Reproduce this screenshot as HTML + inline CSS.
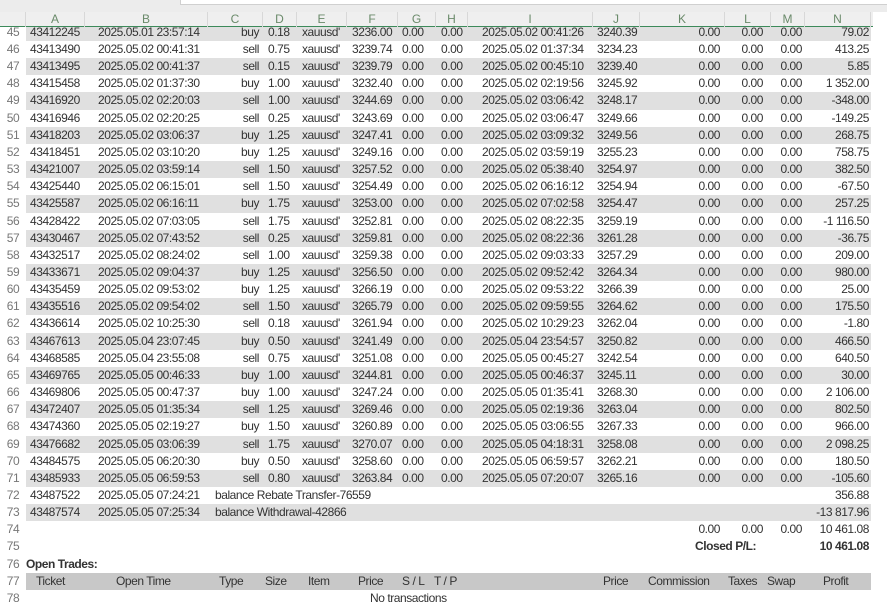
<!DOCTYPE html>
<html><head><meta charset="utf-8"><style>
*{margin:0;padding:0;box-sizing:border-box}
body{width:887px;height:600px;overflow:hidden;background:#fff;font-family:"Liberation Sans",sans-serif;font-size:12px;letter-spacing:-0.45px;color:#333;position:relative}
.top{position:absolute;left:0;top:0;width:887px;height:12px;background:#ececec}
.box{position:absolute;left:180px;top:-1px;width:720px;height:6px;background:#fff;border-bottom:1px solid #d0d0d0;border-left:1px solid #d0d0d0}
.hdr{position:absolute;left:0;top:12px;width:873px;height:15px;background:#efefef;display:grid;grid-template-columns:26px 59px 123px 55px 34px 50px 51px 38px 32px 125px 47px 85px 46px 34px 66px;color:#6a8a6a;font-size:12px;letter-spacing:0;line-height:15px;z-index:2;border-bottom:1.5px solid #3c8a5a}
.hdr div{text-align:center;border-right:1px solid #d8d8d8}
.rows{position:absolute;left:0;top:23.8px;width:871px}
.r{height:17.16px;line-height:17.16px;display:grid;grid-template-columns:26px 59px 123px 55px 34px 50px 51px 38px 32px 125px 47px 85px 46px 34px 66px;white-space:nowrap;position:relative}
.r.g{background:#e0e0e0}
.r.d{background:#c8c8c8}
.r div{overflow:visible}
.r div:nth-child(1){text-align:center;color:#777;background:#fff}
.r div:nth-child(2){padding-left:4px}
.r div:nth-child(3){padding-left:13px}
.r div:nth-child(4){text-align:right;padding-right:4px}
.r div:nth-child(5){padding-left:5px}
.r div:nth-child(6){padding-left:5px}
.r div:nth-child(7){padding-left:5px}
.r div:nth-child(8){padding-left:4px}
.r div:nth-child(9){padding-left:5px}
.r div:nth-child(10){padding-left:14px}
.r div:nth-child(11){padding-left:4px}
.r div:nth-child(12){text-align:right;padding-right:5px}
.r div:nth-child(13){text-align:right;padding-right:8px}
.r div:nth-child(14){text-align:right;padding-right:3px}
.r div:nth-child(15){text-align:right;padding-right:2px}
.b{font-weight:bold}
.abs{position:absolute;white-space:nowrap}
</style></head><body>
<div class="top"><div class="box"></div></div>
<div class="hdr"><div></div><div>A</div><div>B</div><div>C</div><div>D</div><div>E</div><div>F</div><div>G</div><div>H</div><div>I</div><div>J</div><div>K</div><div>L</div><div>M</div><div>N</div></div>
<div class="rows">
<div class="r g"><div>45</div><div>43412245</div><div>2025.05.01 23:57:14</div><div>buy</div><div>0.18</div><div>xauusd'</div><div>3236.00</div><div>0.00</div><div>0.00</div><div>2025.05.02 00:41:26</div><div>3240.39</div><div>0.00</div><div>0.00</div><div>0.00</div><div>79.02</div></div>
<div class="r"><div>46</div><div>43413490</div><div>2025.05.02 00:41:31</div><div>sell</div><div>0.75</div><div>xauusd'</div><div>3239.74</div><div>0.00</div><div>0.00</div><div>2025.05.02 01:37:34</div><div>3234.23</div><div>0.00</div><div>0.00</div><div>0.00</div><div>413.25</div></div>
<div class="r g"><div>47</div><div>43413495</div><div>2025.05.02 00:41:37</div><div>sell</div><div>0.15</div><div>xauusd'</div><div>3239.79</div><div>0.00</div><div>0.00</div><div>2025.05.02 00:45:10</div><div>3239.40</div><div>0.00</div><div>0.00</div><div>0.00</div><div>5.85</div></div>
<div class="r"><div>48</div><div>43415458</div><div>2025.05.02 01:37:30</div><div>buy</div><div>1.00</div><div>xauusd'</div><div>3232.40</div><div>0.00</div><div>0.00</div><div>2025.05.02 02:19:56</div><div>3245.92</div><div>0.00</div><div>0.00</div><div>0.00</div><div>1 352.00</div></div>
<div class="r g"><div>49</div><div>43416920</div><div>2025.05.02 02:20:03</div><div>sell</div><div>1.00</div><div>xauusd'</div><div>3244.69</div><div>0.00</div><div>0.00</div><div>2025.05.02 03:06:42</div><div>3248.17</div><div>0.00</div><div>0.00</div><div>0.00</div><div>-348.00</div></div>
<div class="r"><div>50</div><div>43416946</div><div>2025.05.02 02:20:25</div><div>sell</div><div>0.25</div><div>xauusd'</div><div>3243.69</div><div>0.00</div><div>0.00</div><div>2025.05.02 03:06:47</div><div>3249.66</div><div>0.00</div><div>0.00</div><div>0.00</div><div>-149.25</div></div>
<div class="r g"><div>51</div><div>43418203</div><div>2025.05.02 03:06:37</div><div>buy</div><div>1.25</div><div>xauusd'</div><div>3247.41</div><div>0.00</div><div>0.00</div><div>2025.05.02 03:09:32</div><div>3249.56</div><div>0.00</div><div>0.00</div><div>0.00</div><div>268.75</div></div>
<div class="r"><div>52</div><div>43418451</div><div>2025.05.02 03:10:20</div><div>buy</div><div>1.25</div><div>xauusd'</div><div>3249.16</div><div>0.00</div><div>0.00</div><div>2025.05.02 03:59:19</div><div>3255.23</div><div>0.00</div><div>0.00</div><div>0.00</div><div>758.75</div></div>
<div class="r g"><div>53</div><div>43421007</div><div>2025.05.02 03:59:14</div><div>sell</div><div>1.50</div><div>xauusd'</div><div>3257.52</div><div>0.00</div><div>0.00</div><div>2025.05.02 05:38:40</div><div>3254.97</div><div>0.00</div><div>0.00</div><div>0.00</div><div>382.50</div></div>
<div class="r"><div>54</div><div>43425440</div><div>2025.05.02 06:15:01</div><div>sell</div><div>1.50</div><div>xauusd'</div><div>3254.49</div><div>0.00</div><div>0.00</div><div>2025.05.02 06:16:12</div><div>3254.94</div><div>0.00</div><div>0.00</div><div>0.00</div><div>-67.50</div></div>
<div class="r g"><div>55</div><div>43425587</div><div>2025.05.02 06:16:11</div><div>buy</div><div>1.75</div><div>xauusd'</div><div>3253.00</div><div>0.00</div><div>0.00</div><div>2025.05.02 07:02:58</div><div>3254.47</div><div>0.00</div><div>0.00</div><div>0.00</div><div>257.25</div></div>
<div class="r"><div>56</div><div>43428422</div><div>2025.05.02 07:03:05</div><div>sell</div><div>1.75</div><div>xauusd'</div><div>3252.81</div><div>0.00</div><div>0.00</div><div>2025.05.02 08:22:35</div><div>3259.19</div><div>0.00</div><div>0.00</div><div>0.00</div><div>-1 116.50</div></div>
<div class="r g"><div>57</div><div>43430467</div><div>2025.05.02 07:43:52</div><div>sell</div><div>0.25</div><div>xauusd'</div><div>3259.81</div><div>0.00</div><div>0.00</div><div>2025.05.02 08:22:36</div><div>3261.28</div><div>0.00</div><div>0.00</div><div>0.00</div><div>-36.75</div></div>
<div class="r"><div>58</div><div>43432517</div><div>2025.05.02 08:24:02</div><div>sell</div><div>1.00</div><div>xauusd'</div><div>3259.38</div><div>0.00</div><div>0.00</div><div>2025.05.02 09:03:33</div><div>3257.29</div><div>0.00</div><div>0.00</div><div>0.00</div><div>209.00</div></div>
<div class="r g"><div>59</div><div>43433671</div><div>2025.05.02 09:04:37</div><div>buy</div><div>1.25</div><div>xauusd'</div><div>3256.50</div><div>0.00</div><div>0.00</div><div>2025.05.02 09:52:42</div><div>3264.34</div><div>0.00</div><div>0.00</div><div>0.00</div><div>980.00</div></div>
<div class="r"><div>60</div><div>43435459</div><div>2025.05.02 09:53:02</div><div>buy</div><div>1.25</div><div>xauusd'</div><div>3266.19</div><div>0.00</div><div>0.00</div><div>2025.05.02 09:53:22</div><div>3266.39</div><div>0.00</div><div>0.00</div><div>0.00</div><div>25.00</div></div>
<div class="r g"><div>61</div><div>43435516</div><div>2025.05.02 09:54:02</div><div>sell</div><div>1.50</div><div>xauusd'</div><div>3265.79</div><div>0.00</div><div>0.00</div><div>2025.05.02 09:59:55</div><div>3264.62</div><div>0.00</div><div>0.00</div><div>0.00</div><div>175.50</div></div>
<div class="r"><div>62</div><div>43436614</div><div>2025.05.02 10:25:30</div><div>sell</div><div>0.18</div><div>xauusd'</div><div>3261.94</div><div>0.00</div><div>0.00</div><div>2025.05.02 10:29:23</div><div>3262.04</div><div>0.00</div><div>0.00</div><div>0.00</div><div>-1.80</div></div>
<div class="r g"><div>63</div><div>43467613</div><div>2025.05.04 23:07:45</div><div>buy</div><div>0.50</div><div>xauusd'</div><div>3241.49</div><div>0.00</div><div>0.00</div><div>2025.05.04 23:54:57</div><div>3250.82</div><div>0.00</div><div>0.00</div><div>0.00</div><div>466.50</div></div>
<div class="r"><div>64</div><div>43468585</div><div>2025.05.04 23:55:08</div><div>sell</div><div>0.75</div><div>xauusd'</div><div>3251.08</div><div>0.00</div><div>0.00</div><div>2025.05.05 00:45:27</div><div>3242.54</div><div>0.00</div><div>0.00</div><div>0.00</div><div>640.50</div></div>
<div class="r g"><div>65</div><div>43469765</div><div>2025.05.05 00:46:33</div><div>buy</div><div>1.00</div><div>xauusd'</div><div>3244.81</div><div>0.00</div><div>0.00</div><div>2025.05.05 00:46:37</div><div>3245.11</div><div>0.00</div><div>0.00</div><div>0.00</div><div>30.00</div></div>
<div class="r"><div>66</div><div>43469806</div><div>2025.05.05 00:47:37</div><div>buy</div><div>1.00</div><div>xauusd'</div><div>3247.24</div><div>0.00</div><div>0.00</div><div>2025.05.05 01:35:41</div><div>3268.30</div><div>0.00</div><div>0.00</div><div>0.00</div><div>2 106.00</div></div>
<div class="r g"><div>67</div><div>43472407</div><div>2025.05.05 01:35:34</div><div>sell</div><div>1.25</div><div>xauusd'</div><div>3269.46</div><div>0.00</div><div>0.00</div><div>2025.05.05 02:19:36</div><div>3263.04</div><div>0.00</div><div>0.00</div><div>0.00</div><div>802.50</div></div>
<div class="r"><div>68</div><div>43474360</div><div>2025.05.05 02:19:27</div><div>buy</div><div>1.50</div><div>xauusd'</div><div>3260.89</div><div>0.00</div><div>0.00</div><div>2025.05.05 03:06:55</div><div>3267.33</div><div>0.00</div><div>0.00</div><div>0.00</div><div>966.00</div></div>
<div class="r g"><div>69</div><div>43476682</div><div>2025.05.05 03:06:39</div><div>sell</div><div>1.75</div><div>xauusd'</div><div>3270.07</div><div>0.00</div><div>0.00</div><div>2025.05.05 04:18:31</div><div>3258.08</div><div>0.00</div><div>0.00</div><div>0.00</div><div>2 098.25</div></div>
<div class="r"><div>70</div><div>43484575</div><div>2025.05.05 06:20:30</div><div>buy</div><div>0.50</div><div>xauusd'</div><div>3258.60</div><div>0.00</div><div>0.00</div><div>2025.05.05 06:59:57</div><div>3262.21</div><div>0.00</div><div>0.00</div><div>0.00</div><div>180.50</div></div>
<div class="r g"><div>71</div><div>43485933</div><div>2025.05.05 06:59:53</div><div>sell</div><div>0.80</div><div>xauusd'</div><div>3263.84</div><div>0.00</div><div>0.00</div><div>2025.05.05 07:20:07</div><div>3265.16</div><div>0.00</div><div>0.00</div><div>0.00</div><div>-105.60</div></div>
<div class="r"><div>72</div><div>43487522</div><div>2025.05.05 07:24:21</div><div style="text-align:left;padding-left:7px">balance Rebate Transfer-76559</div><div></div><div></div><div></div><div></div><div></div><div></div><div></div><div></div><div></div><div></div><div>356.88</div></div>
<div class="r g"><div>73</div><div>43487574</div><div>2025.05.05 07:25:34</div><div style="text-align:left;padding-left:7px">balance Withdrawal-42866</div><div></div><div></div><div></div><div></div><div></div><div></div><div></div><div></div><div></div><div></div><div>-13 817.96</div></div>
<div class="r"><div>74</div><div></div><div></div><div></div><div></div><div></div><div></div><div></div><div></div><div></div><div></div><div>0.00</div><div>0.00</div><div>0.00</div><div>10 461.08</div></div>
<div class="r"><div>75</div><span class="abs b" style="left:695px">Closed P/L:</span><span class="abs b" style="right:2px">10 461.08</span></div>
<div class="r"><div>76</div><div class="b" style="padding-left:0">Open Trades:</div></div>
<div class="r d"><div>77</div>
<span class="abs" style="left:36px">Ticket</span><span class="abs" style="left:116px">Open Time</span><span class="abs" style="left:219px">Type</span><span class="abs" style="left:265px">Size</span><span class="abs" style="left:308px">Item</span><span class="abs" style="left:358px">Price</span><span class="abs" style="left:402px">S / L</span><span class="abs" style="left:434px">T / P</span><span class="abs" style="left:603px">Price</span><span class="abs" style="left:648px">Commission</span><span class="abs" style="left:728px">Taxes</span><span class="abs" style="left:767px">Swap</span><span class="abs" style="left:823px">Profit</span></div>
<div class="r"><div>78</div><span class="abs" style="left:370px">No transactions</span></div>
</div>
</body></html>
